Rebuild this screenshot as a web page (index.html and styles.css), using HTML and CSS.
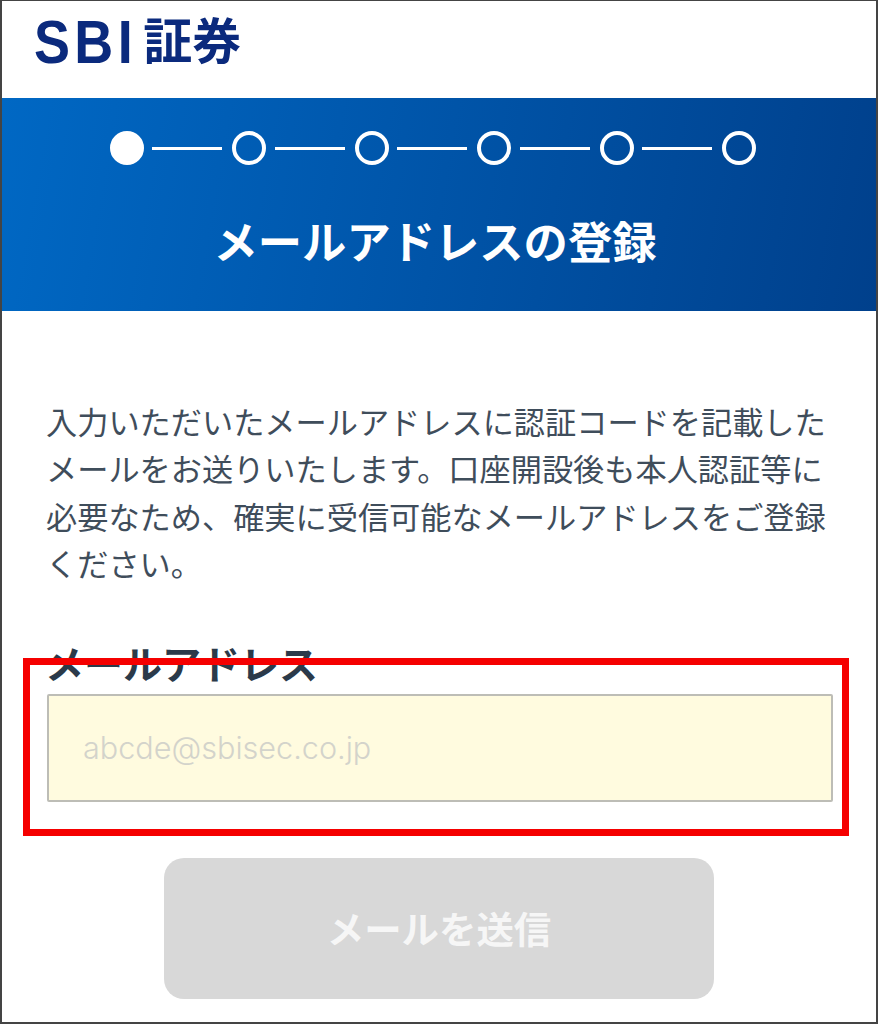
FILE: index.html
```html
<!DOCTYPE html>
<html lang="ja">
  <head>
    <meta charset="UTF-8" />
    <title>メールアドレスの登録</title>
    <link rel="stylesheet" href="styles.css">
  </head>
  <body>
    <div class="page">
      <header class="site-header">
        <div class="logo"><span class="logo-latin">SBI</span><span class="logo-kanji">証券</span></div>
      </header>

      <!-- Step indicator and title -->
      <section class="band">
        <div class="steps">
          <span class="step done"></span>
          <span class="step-line"></span>
          <span class="step"></span>
          <span class="step-line"></span>
          <span class="step"></span>
          <span class="step-line"></span>
          <span class="step"></span>
          <span class="step-line"></span>
          <span class="step"></span>
          <span class="step-line"></span>
          <span class="step"></span>
        </div>
        <h1>メールアドレスの登録</h1>
      </section>

      <main class="content">
        <p class="intro">入力いただいたメールアドレスに認証コードを記載したメールをお送りいたします。口座開設後も本人認証等に必要なため、確実に受信可能なメールアドレスをご登録ください。</p>
        <label class="field-label" for="email">メールアドレス</label>
        <input class="field-input" id="email" type="email" placeholder="abcde@sbisec.co.jp" />
        <div class="buttons">
          <button type="button" class="send" disabled>メールを送信</button>
        </div>
      </main>

      <!-- Annotation drawn over the screenshot -->
      <div class="highlight"></div>
    </div>
  </body>
</html>
```

FILE: styles.css
```css
* {
  box-sizing: border-box;
}

body {
  margin: 0;
  background: #fff;
  font-family: "Noto Sans CJK JP", "Noto Sans", sans-serif;
}

.page {
  position: relative;
  width: 878px;
  height: 1024px;
  overflow: hidden;
  border: 2px solid #444;
  border-top-width: 1px;
  background: #fff;
}

.site-header {
  height: 97px;
  padding: 9px 0 0 32px;
}

.logo {
  display: flex;
  align-items: center;
  height: 64px;
  color: #0b2a7d;
  font-weight: 700;
}

.logo-latin {
  display: inline-block;
  font-family: "Liberation Sans", sans-serif;
  font-size: 62px;
  letter-spacing: 5px;
  line-height: 64px;
  transform: scaleX(0.87);
  transform-origin: left center;
}

.logo-kanji {
  margin: -8px 0 0 -9px;
  font-size: 49px;
  line-height: 64px;
}

.band {
  height: 213px;
  padding-top: 33px;
  background: linear-gradient(100deg, #0068c4 0%, #0054a8 50%, #00408c 100%);
  color: #fff;
}

.steps {
  display: flex;
  align-items: center;
  margin-left: 108px;
}

.step {
  flex: none;
  width: 34px;
  height: 34px;
  border: 4px solid #fff;
  border-radius: 50%;
}

.step.done {
  background: #fff;
}

.step-line {
  flex: none;
  width: 70px;
  height: 3px;
  margin: 0 10px 0 8.4px;
  background: #fff;
}

.band h1 {
  margin: 43px 0 0;
  padding-right: 8px;
  font-size: 44.3px;
  font-weight: 700;
  line-height: 64px;
  text-align: center;
}

.content {
  padding: 86px 44px 0 45px;
}

.intro {
  margin: 0 0 0 -1px;
  color: #3f4d5b;
  font-size: 31.2px;
  line-height: 47.4px;
}

.field-label {
  display: block;
  margin: 47px 0 0 -2px;
  color: #2b3a4a;
  font-size: 39px;
  font-weight: 700;
  line-height: 56px;
}

.field-input {
  display: block;
  width: 786px;
  height: 108px;
  margin-top: 4px;
  padding: 0 34px;
  border: 2px solid #bdbdb6;
  border-radius: 2px;
  background: #fffbdf;
  font-family: "Inter", "Liberation Sans", sans-serif;
  font-size: 30.6px;
  font-weight: 300;
  outline: none;
}

.field-input::placeholder {
  color: #d3d3cb;
  opacity: 1;
}

.buttons {
  margin-top: 56px;
  padding-left: 117px;
}

.send {
  display: block;
  width: 550px;
  height: 141px;
  border: none;
  border-radius: 20px;
  background: #d8d8d8;
  color: #f6f6f6;
  font-family: inherit;
  font-size: 37.4px;
  font-weight: 700;
}

.highlight {
  position: absolute;
  left: 21px;
  top: 657px;
  width: 826px;
  height: 178px;
  border: 7px solid #f50000;
}
```
